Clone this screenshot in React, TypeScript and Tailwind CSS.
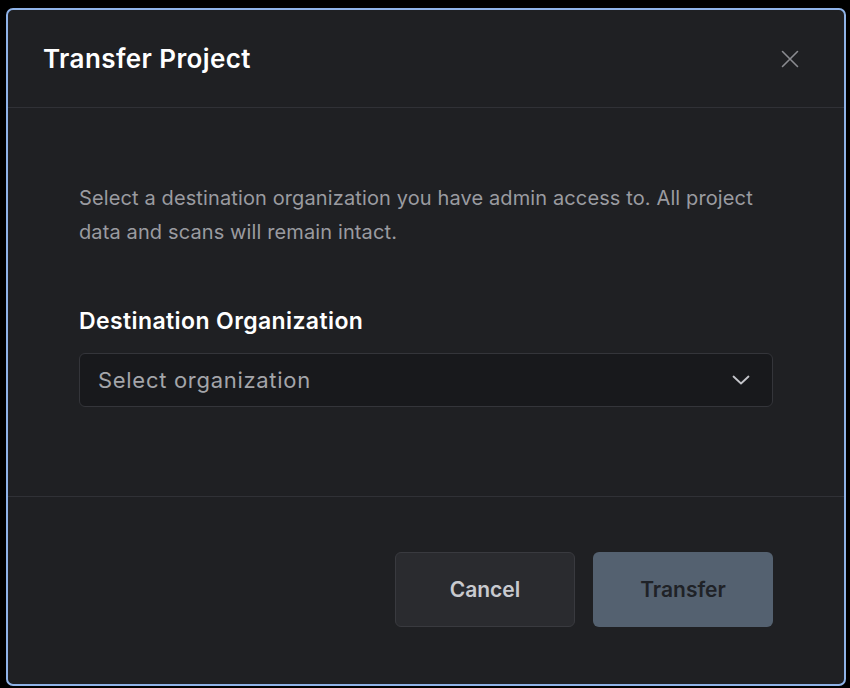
import React from "react";

export default function App() {
  return (
    <div
      className="w-[850px] h-[688px] bg-black pl-[6px] pt-[8px]"
      style={{ fontFamily: "Inter, 'Noto Sans', sans-serif" }}
    >
      <div className="w-[840px] h-[678px] rounded-[7px] border-2 border-[#8fb3e8] bg-[#1f2023] flex flex-col overflow-hidden">
        <div className="h-[98px] flex items-center justify-between pl-[35px] pr-[45px] border-b border-[#303136]">
          <h2 className="text-[26px] font-semibold text-white tracking-[0.4px]">Transfer Project</h2>
          <svg width="18" height="18" viewBox="0 0 18 18" fill="none" stroke="#8a8b90" strokeWidth="1.6" strokeLinecap="round">
            <path d="M1.5 1.5L16.5 16.5M16.5 1.5L1.5 16.5" />
          </svg>
        </div>
        <div className="h-[389px] px-[71px] pt-[73px] border-b border-[#303136]">
          <p className="text-[20px] leading-[34px] text-[#9a9ba0] tracking-[0.12px]">
            Select a destination organization you have admin access to. All project data and scans will remain intact.
          </p>
          <div className="mt-[57px] text-[23px] leading-[30px] font-semibold text-white tracking-[0.4px]">Destination Organization</div>
          <div className="mt-[17px] h-[54px] rounded-[6px] border border-[#34353a] bg-[#18191c] flex items-center justify-between pl-[18px] pr-[22px]">
            <span className="text-[22px] text-[#a4a5aa] tracking-[0.7px]">Select organization</span>
            <svg width="18" height="10" viewBox="0 0 18 10" fill="none" stroke="#c4c5ca" strokeWidth="1.8" strokeLinecap="round" strokeLinejoin="round">
              <path d="M1.5 1.5L9 8.5L16.5 1.5" />
            </svg>
          </div>
        </div>
        <div className="flex-1 flex justify-end items-start pt-[55px] pr-[71px] gap-[18px]">
          <button className="w-[180px] h-[75px] rounded-[6px] border border-[#393a3f] bg-[#2a2b2f] text-[21px] font-semibold text-[#c9cacf]">
            Cancel
          </button>
          <button className="w-[180px] h-[75px] rounded-[6px] bg-[#546170] text-[21px] font-semibold text-[#1f2227]">
            Transfer
          </button>
        </div>
      </div>
    </div>
  );
}
